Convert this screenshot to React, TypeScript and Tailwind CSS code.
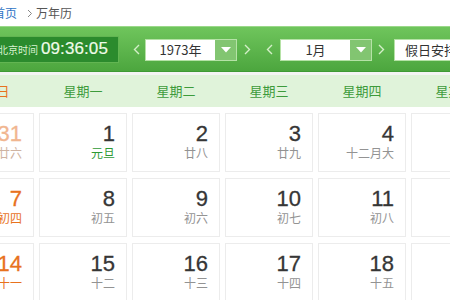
import React from 'react';

type Day = { n: number; lunar: string; kind?: 'faded' | 'holiday' };

const weekdays = ['星期日', '星期一', '星期二', '星期三', '星期四', '星期五', '星期六'];

const weeks: Day[][] = [
  [
    { n: 31, lunar: '廿六', kind: 'faded' },
    { n: 1, lunar: '元旦', kind: 'holiday' },
    { n: 2, lunar: '廿八' },
    { n: 3, lunar: '廿九' },
    { n: 4, lunar: '十二月大' },
    { n: 5, lunar: '初二' },
    { n: 6, lunar: '初三' },
  ],
  [
    { n: 7, lunar: '初四' },
    { n: 8, lunar: '初五' },
    { n: 9, lunar: '初六' },
    { n: 10, lunar: '初七' },
    { n: 11, lunar: '初八' },
    { n: 12, lunar: '初九' },
    { n: 13, lunar: '初十' },
  ],
  [
    { n: 14, lunar: '十一' },
    { n: 15, lunar: '十二' },
    { n: 16, lunar: '十三' },
    { n: 17, lunar: '十四' },
    { n: 18, lunar: '十五' },
    { n: 19, lunar: '十六' },
    { n: 20, lunar: '十七' },
  ],
];

const Chevron = ({ dir }: { dir: 'left' | 'right' }) => (
  <svg width="7" height="11" viewBox="0 0 7 11" className="shrink-0">
    <polyline
      points={dir === 'left' ? '6,1 1.5,5.5 6,10' : '1,1 5.5,5.5 1,10'}
      fill="none"
      stroke="#d4efc8"
      strokeWidth="1.4"
    />
  </svg>
);

const Select = ({ value }: { value: string }) => (
  <div className="flex h-[22px] w-[92px] border border-[#b5e2a6] bg-white">
    <div className="flex flex-1 items-center justify-center text-[13px] text-[#333]">{value}</div>
    <div className="flex w-[21px] items-center justify-center bg-[#82c571]">
      <svg width="10" height="6" viewBox="0 0 10 6">
        <polygon points="0,0 10,0 5,5.5" fill="#ffffff" />
      </svg>
    </div>
  </div>
);

const DayCell = ({ day, col }: { day: Day; col: number }) => {
  const weekend = col === 0 || col === 6;
  let numColor = 'text-[#363636]';
  let lunarColor = 'text-[#939393]';
  if (weekend) {
    numColor = 'text-[#e8721e]';
    lunarColor = 'text-[#e8721e]';
  }
  if (day.kind === 'faded') {
    numColor = 'text-[#f1b690]';
    lunarColor = 'text-[#cfb4a2]';
  }
  if (day.kind === 'holiday') lunarColor = 'text-[#2e9a35]';

  return (
    <div className="flex h-[59px] flex-col items-end border border-[#ececec] bg-white pr-[11px] pt-[9px]">
      <div className={`text-[22px] leading-[22px] [-webkit-text-stroke:0.3px_currentColor] font-['Liberation_Sans',Arial,sans-serif] ${numColor}`}>{day.n}</div>
      <div className={`mt-[1px] text-[12px] leading-[14px] ${lunarColor}`}>{day.lunar}</div>
    </div>
  );
};

export default function App() {
  return (
    <div className="h-[300px] w-[450px] overflow-hidden bg-white font-['Noto_Sans_CJK_SC','Liberation_Sans',sans-serif]">
      <div className="-ml-[54px] w-[700px]">
        {/* breadcrumb */}
        <div className="flex h-[26px] items-center pl-[47px] text-[12px]">
          <span className="text-[#2f74c6]">首页</span>
          <svg width="6" height="9" viewBox="0 0 6 9" className="ml-[10px] mr-[3px]">
            <polyline points="1,1 4.5,4.5 1,8" fill="none" stroke="#888" strokeWidth="1" />
          </svg>
          <span className="text-[#555]">万年历</span>
        </div>

        {/* green toolbar */}
        <div className="flex h-[46px] items-center border-t border-t-[#9ad889] border-b border-b-[#3f9a35] bg-gradient-to-b from-[#6fc55c] to-[#4ca63e]">
          <div className="ml-[42px] flex h-[27px] w-[131px] items-center border border-[#62b552] bg-[#2b8b2d] pl-[9px]">
            <span className="text-[10px] text-[#d9f2d0]">北京时间</span>
            <span className="ml-[3px] text-[17px] tracking-[0.1px] text-[#effbe9] [-webkit-text-stroke:0.2px_currentColor] font-['Liberation_Sans',Arial,sans-serif]">09:36:05</span>
          </div>
          <div className="ml-[14px] flex items-center">
            <Chevron dir="left" />
          </div>
          <div className="ml-[5px] mt-[2px]">
            <Select value="1973年" />
          </div>
          <div className="ml-[7px]"><Chevron dir="right" /></div>
          <div className="ml-[15px]"><Chevron dir="left" /></div>
          <div className="ml-[7px] mt-[2px]">
            <Select value="1月" />
          </div>
          <div className="ml-[6px]"><Chevron dir="right" /></div>
          <div className="ml-[9px] mt-[2px] flex h-[22px] w-[120px] items-center border border-[#b5e2a6] bg-white pl-[10px] text-[13px] text-[#333]">
            假日安排
          </div>
        </div>

        <div className="h-[3px] bg-[#f4f4f4]" />

        {/* weekday header */}
        <div className="grid h-[32px] grid-cols-[repeat(7,88px)] gap-x-[5px] bg-[#e0f3da]">
          {weekdays.map((w, i) => (
            <div
              key={w}
              className={`flex items-center justify-center text-[13px] ${i === 0 || i === 6 ? 'text-[#e8721e]' : 'text-[#3d9b3b]'}`}
            >
              {w}
            </div>
          ))}
        </div>

        {/* days */}
        <div className="mt-[6px] flex flex-col gap-[6px]">
          {weeks.map((week, r) => (
            <div key={r} className="grid grid-cols-[repeat(7,88px)] gap-x-[5px]">
              {week.map((d, c) => (
                <DayCell key={c} day={d} col={c} />
              ))}
            </div>
          ))}
        </div>
      </div>
    </div>
  );
}
